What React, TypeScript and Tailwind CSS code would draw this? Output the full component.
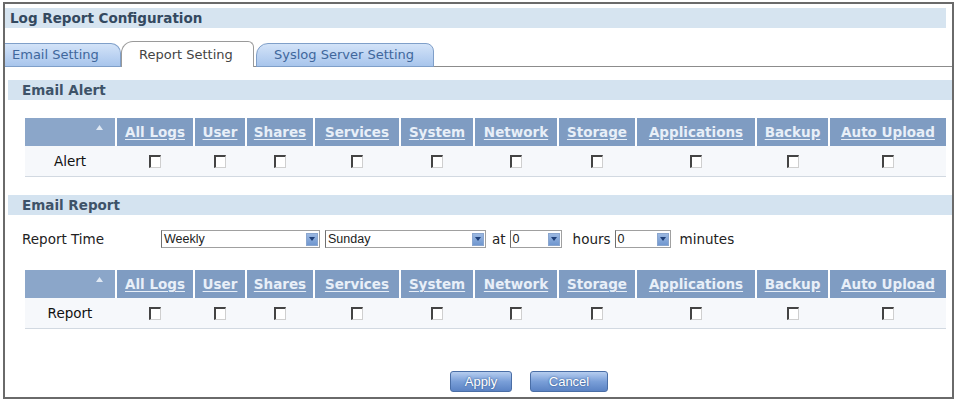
import React from "react";

type Col = { label: string; w: string };

const cols: Col[] = [
  { label: "All Logs", w: "w-[76px]" },
  { label: "User", w: "w-[50px]" },
  { label: "Shares", w: "w-[66px]" },
  { label: "Services", w: "w-[84px]" },
  { label: "System", w: "w-[72px]" },
  { label: "Network", w: "w-[82px]" },
  { label: "Storage", w: "w-[76px]" },
  { label: "Applications", w: "w-[118px]" },
  { label: "Backup", w: "w-[71px]" },
  { label: "Auto Upload", w: "w-[116px]" },
];

const font = "font-['DejaVu_Sans',Verdana,sans-serif]";

const Checkbox: React.FC = () => (
  <span className="block w-[12px] h-[13px] bg-white border-t-2 border-l-2 border-r border-b border-t-[#444] border-l-[#444] border-r-[#cfcfcf] border-b-[#cfcfcf]" />
);

const SectionHeader: React.FC<{ title: string }> = ({ title }) => (
  <div className="ml-[3px] h-[20px] bg-[#d4e3f0] flex items-center pl-[14px]">
    <span className="text-[13.5px] font-bold text-[#3e5369]">{title}</span>
  </div>
);

const LogTable: React.FC<{ rowLabel: string }> = ({ rowLabel }) => (
  <div className="ml-[20px] w-[921px]">
    <div className="flex gap-[2px] h-[28px]">
      <div className="w-[90px] bg-[#8ba6c9] relative">
        <svg className="absolute right-[12px] top-[7px]" width="7" height="5" viewBox="0 0 7 5">
          <path d="M0 5 L3.5 0 L7 5 Z" fill="#dfe8f3" />
        </svg>
      </div>
      {cols.map((c) => (
        <div key={c.label} className={`${c.w} bg-[#7f9cc2] flex items-center justify-center`}>
          <span className="text-[13.5px] font-bold text-[#e8eff8] underline underline-offset-2 whitespace-nowrap">
            {c.label}
          </span>
        </div>
      ))}
    </div>
    <div className="flex gap-[2px] h-[31px] bg-[#f6f8fb] border-b border-[#d2d9e1]">
      <div className="w-[90px] flex items-center justify-center text-[13.5px] text-[#111]">{rowLabel}</div>
      {cols.map((c) => (
        <div key={c.label} className={`${c.w} flex items-center justify-center`}>
          <Checkbox />
        </div>
      ))}
    </div>
  </div>
);

const Select: React.FC<{ value: string; w: string }> = ({ value, w }) => (
  <div className={`${w} h-[18px] bg-white border border-[#a0a0a0] border-l-[#707070] flex items-center justify-between pl-[2px] pr-[1px]`}>
    <span className="font-['Liberation_Sans',Arial,sans-serif] text-[12.5px] text-[#222] leading-none">{value}</span>
    <span className="w-[12px] h-[13px] bg-gradient-to-b from-[#9bb8e2] to-[#7097cf] border border-[#8aa6cf] flex items-center justify-center">
      <svg width="6" height="4" viewBox="0 0 6 4">
        <path d="M0 0 L6 0 L3 4 Z" fill="#1e3f78" />
      </svg>
    </span>
  </div>
);

const Button: React.FC<{ label: string; w: string }> = ({ label, w }) => (
  <button
    type="button"
    className={`${w} h-[21px] rounded-[3px] border border-[#4a6ea6] bg-gradient-to-b from-[#b6cdef] via-[#7a9fd8] to-[#5b83c4] text-white font-['Liberation_Sans',Arial,sans-serif] text-[13px] [text-shadow:0_0_2px_#23467e]`}
  >
    {label}
  </button>
);

export default function App() {
  return (
    <div className={`w-[957px] h-[401px] bg-white pt-[2px] pl-[3px] pr-[3px] ${font}`}>
      <div className="h-[397px] border-2 border-[#6a6a6a] flex flex-col">
        <div className="mt-[4px] mr-[6px] h-[20px] bg-[#d6e4f0] flex items-center pl-[5px]">
          <span className="text-[13.5px] font-bold text-[#34495f]">Log Report Configuration</span>
        </div>

        <div className="mt-[13px] h-[26px] flex items-end border-b border-[#8c8c8c]">
          <div className="w-[116px] h-[24px] -mb-px rounded-tr-[10px] border border-l-0 border-[#7f9fc9] bg-gradient-to-b from-[#d3e3f8] to-[#a8c5ec] flex items-center pl-[7px]">
            <span className="text-[13px] text-[#40679c]">Email Setting</span>
          </div>
          <div className="relative z-10 w-[133px] h-[26px] -mb-px rounded-tl-[12px] rounded-tr-[6px] border border-b-0 border-[#9a9a9a] bg-white flex items-center pl-[17px]">
            <span className="text-[13px] text-[#444]">Report Setting</span>
          </div>
          <div className="ml-[2px] w-[178px] h-[24px] -mb-px rounded-tl-[12px] rounded-tr-[8px] border border-[#7f9fc9] bg-gradient-to-b from-[#d3e3f8] to-[#a8c5ec] flex items-center pl-[17px]">
            <span className="text-[13px] text-[#40679c]">Syslog Server Setting</span>
          </div>
        </div>

        <div className="mt-[13px]">
          <SectionHeader title="Email Alert" />
        </div>
        <div className="mt-[18px]">
          <LogTable rowLabel="Alert" />
        </div>

        <div className="mt-[18px]">
          <SectionHeader title="Email Report" />
        </div>

        <div className="mt-[14px] flex items-center pl-[17px] text-[13.5px] text-[#222]">
          <span className="w-[139px]">Report Time</span>
          <Select value="Weekly" w="w-[159px]" />
          <span className="w-[5px]" />
          <Select value="Sunday" w="w-[161px]" />
          <span className="ml-[6px] mr-[4px]">at</span>
          <Select value="0" w="w-[52px]" />
          <span className="ml-[11px] mr-[4px]">hours</span>
          <Select value="0" w="w-[56px]" />
          <span className="ml-[9px]">minutes</span>
        </div>

        <div className="mt-[21px]">
          <LogTable rowLabel="Report" />
        </div>

        <div className="mt-[42px] ml-[445px] flex gap-[18px]">
          <Button label="Apply" w="w-[62px]" />
          <Button label="Cancel" w="w-[78px]" />
        </div>
      </div>
    </div>
  );
}
